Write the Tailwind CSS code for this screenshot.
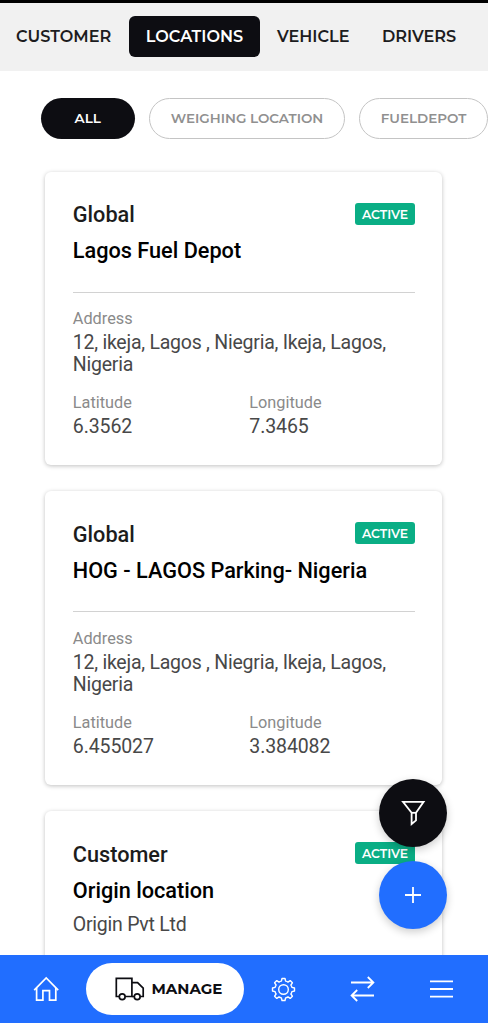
<!DOCTYPE html>
<html lang="en">
<head>
<meta charset="utf-8">
<title>Locations</title>
<script src="https://cdn.jsdelivr.net/npm/@tailwindcss/browser@4"></script>
</head>
<body class="relative flex h-[1024px] w-[488px] flex-col overflow-hidden bg-white font-['Montserrat','Inter',sans-serif]">
  <header class="flex h-[70.5px] shrink-0 items-start border-t-[3px] border-black bg-[#f1f1f1] pt-[13px] text-[16.1px] font-semibold leading-[40px] text-[#1c1c20] whitespace-nowrap">
    <a class="w-[129px] pl-4"><span>CUSTOMER</span></a>
    <a class="h-[41px] w-[131px] rounded-md bg-[#0d0d12] text-center text-white">LOCATIONS</a>
    <a class="w-[122px] pl-[17px]">VEHICLE</a>
    <a>DRIVERS</a>
  </header>

  <div class="flex shrink-0 gap-[14px] pt-[27px] pl-[40.5px] text-[13.5px] font-semibold leading-[38px] text-[#909090] whitespace-nowrap">
    <button class="h-[41px] w-[94.5px] shrink-0 rounded-full bg-[#0d0d12] text-white">ALL</button>
    <button class="h-[41px] w-[196px] shrink-0 rounded-full border border-[#c4c4c4]">WEIGHING LOCATION</button>
    <button class="h-[41px] w-[129px] shrink-0 rounded-full border border-[#c4c4c4]">FUELDEPOT</button>
  </div>

  <main class="flex min-h-0 flex-1 flex-col gap-[26px] overflow-hidden pt-[33px] pl-[45.4px] font-['Roboto',sans-serif]">
    <article class="h-[293.7px] w-[397px] shrink-0 rounded-md bg-white px-[27.4px] pt-[25.5px] shadow-[0_1px_4px_rgba(0,0,0,0.25)]">
      <div class="flex items-start justify-between">
        <h3 class="text-[21.7px] font-medium leading-[36px] text-[#1c1c1c]">Global</h3>
        <span class="mt-[5.5px] h-[22px] w-[60px] rounded-[3px] bg-[#0aae85] text-center font-['Montserrat','Inter',sans-serif] text-[12.4px] font-semibold leading-[23px] text-white">ACTIVE</span>
      </div>
      <h2 class="text-[21.7px] font-medium leading-[36px] text-black">Lagos Fuel Depot</h2>
      <div class="mt-[22.5px] border-t border-[#d2d2d2] pt-[12.6px]">
        <p class="text-[16.3px] leading-[27px] text-[#8a8a8a]">Address</p>
        <p class="text-[19.5px] leading-[22px] tracking-[-0.24px] text-[#484848]">12, ikeja, Lagos , Niegria, Ikeja, Lagos, Nigeria</p>
      </div>
      <div class="mt-[13px] flex">
        <div class="w-[176.5px]"><p class="text-[16.3px] leading-[27px] text-[#8a8a8a]">Latitude</p><p class="text-[19.5px] leading-[21px] tracking-[-0.1px] text-[#484848]">6.3562</p></div>
        <div><p class="text-[16.3px] leading-[27px] text-[#8a8a8a]">Longitude</p><p class="text-[19.5px] leading-[21px] tracking-[-0.1px] text-[#484848]">7.3465</p></div>
      </div>
    </article>

    <article class="h-[293.7px] w-[397px] shrink-0 rounded-md bg-white px-[27.4px] pt-[25.5px] shadow-[0_1px_4px_rgba(0,0,0,0.25)]">
      <div class="flex items-start justify-between">
        <h3 class="text-[21.7px] font-medium leading-[36px] text-[#1c1c1c]">Global</h3>
        <span class="mt-[5.5px] h-[22px] w-[60px] rounded-[3px] bg-[#0aae85] text-center font-['Montserrat','Inter',sans-serif] text-[12.4px] font-semibold leading-[23px] text-white">ACTIVE</span>
      </div>
      <h2 class="text-[21.7px] font-medium leading-[36px] text-black">HOG - LAGOS Parking- Nigeria</h2>
      <div class="mt-[22.5px] border-t border-[#d2d2d2] pt-[12.6px]">
        <p class="text-[16.3px] leading-[27px] text-[#8a8a8a]">Address</p>
        <p class="text-[19.5px] leading-[22px] tracking-[-0.24px] text-[#484848]">12, ikeja, Lagos , Niegria, Ikeja, Lagos, Nigeria</p>
      </div>
      <div class="mt-[13px] flex">
        <div class="w-[176.5px]"><p class="text-[16.3px] leading-[27px] text-[#8a8a8a]">Latitude</p><p class="text-[19.5px] leading-[21px] tracking-[-0.1px] text-[#484848]">6.455027</p></div>
        <div><p class="text-[16.3px] leading-[27px] text-[#8a8a8a]">Longitude</p><p class="text-[19.5px] leading-[21px] tracking-[-0.1px] text-[#484848]">3.384082</p></div>
      </div>
    </article>

    <article class="h-[293.7px] w-[397px] shrink-0 rounded-md bg-white px-[27.4px] pt-[25.7px] shadow-[0_1px_4px_rgba(0,0,0,0.25)]">
      <div class="flex items-start justify-between">
        <h3 class="text-[21.7px] font-medium leading-[36px] text-[#1c1c1c]">Customer</h3>
        <span class="mt-[5.5px] h-[22px] w-[60px] rounded-[3px] bg-[#0aae85] text-center font-['Montserrat','Inter',sans-serif] text-[12.4px] font-semibold leading-[23px] text-white">ACTIVE</span>
      </div>
      <h2 class="text-[21.7px] font-medium leading-[36px] text-black">Origin location</h2>
      <p class="text-[19.5px] leading-[32px] tracking-[-0.24px] text-[#484848]">Origin Pvt Ltd</p>
    </article>
  </main>

  <div class="absolute top-[779px] left-[379.3px] flex flex-col gap-[13.5px]">
    <button class="flex size-[68px] items-center justify-center rounded-full bg-[#0d0d12] shadow-[0_3px_8px_rgba(0,0,0,0.2)]">
      <svg class="size-[26px]" viewBox="0 0 26 26" fill="none" stroke="#fff" stroke-width="1.8"><path d="M3 1.8H23.6L16 12.8V20.4L11.6 24V12.8Z"/><path d="M11.6 12.8H16"/></svg>
    </button>
    <button class="flex size-[68px] items-center justify-center rounded-full bg-[#216eff] shadow-[0_3px_8px_rgba(0,0,0,0.2)]">
      <svg class="size-[16px]" viewBox="0 0 16 16" fill="none" stroke="#fff" stroke-width="1.8"><path d="M8 0V16M0 8H16"/></svg>
    </button>
  </div>

  <nav class="mb-px flex h-[68px] shrink-0 items-center bg-[#216eff]">
    <a class="flex w-[86px] pl-[33px]">
      <svg class="h-[26px] w-[27px]" viewBox="0 0 27 26" fill="none" stroke="#fff" stroke-width="1.7"><path d="M1.2 14.1L13.2 1.9L25.2 14.1"/><path d="M3.6 12V24.2H9.9V14.7H16.5V24.2H22.8V12"/></svg>
    </a>
    <a class="flex h-[52px] w-[158px] items-center rounded-full bg-white pl-[29px] text-[#0d0d12]">
      <svg class="h-[24px] w-[30px]" viewBox="0 0 30 24" fill="none" stroke="currentColor" stroke-width="1.7"><path d="M4 19.5H1.3V1.4H16.9V19.5H10.2"/><path d="M16.9 5.6H22.6L28.2 11.2V19.5H25.2M16.9 19.5H19"/><circle cx="7.2" cy="19.7" r="2.9"/><circle cx="22.2" cy="19.7" r="2.9"/></svg>
      <span class="ml-[6.5px] text-[15px] font-bold">MANAGE</span>
    </a>
    <a class="ml-[27px] flex w-[79px]">
      <svg class="size-[25px]" viewBox="0 0 25 25" fill="none" stroke="#fff" stroke-width="1.4" stroke-linejoin="round"><path d="M11 1.5H14L14.6 4.1Q16 4.4 17 5.1L19.2 3.6L21.4 5.8L19.9 8Q20.6 9 20.9 10.4L23.5 11V14L20.9 14.6Q20.6 16 19.9 17L21.4 19.2L19.2 21.4L17 19.9Q16 20.6 14.6 20.9L14 23.5H11L10.4 20.9Q9 20.6 8 19.9L5.8 21.4L3.6 19.2L5.1 17Q4.4 16 4.1 14.6L1.5 14V11L4.1 10.4Q4.4 9 5.1 8L3.6 5.8L5.8 3.6L8 5.1Q9 4.4 10.4 4.1Z"/><circle cx="12.5" cy="12.5" r="4.8"/></svg>
    </a>
    <a class="flex w-[79px]">
      <svg class="h-[26px] w-[25px]" viewBox="0 0 25 26" fill="none" stroke="#fff" stroke-width="1.8"><path d="M1 6.5H23.4M17.8 1L23.4 6.5L17.8 12M24 19.5H1.6M7.2 14L1.6 19.5L7.2 25"/></svg>
    </a>
    <a class="flex">
      <svg class="h-[20px] w-[25px]" viewBox="0 0 25 20" fill="none" stroke="#fff" stroke-width="1.8"><path d="M1 2.4H24M1 10H24M1 17.6H24"/></svg>
    </a>
  </nav>
</body>
</html>
